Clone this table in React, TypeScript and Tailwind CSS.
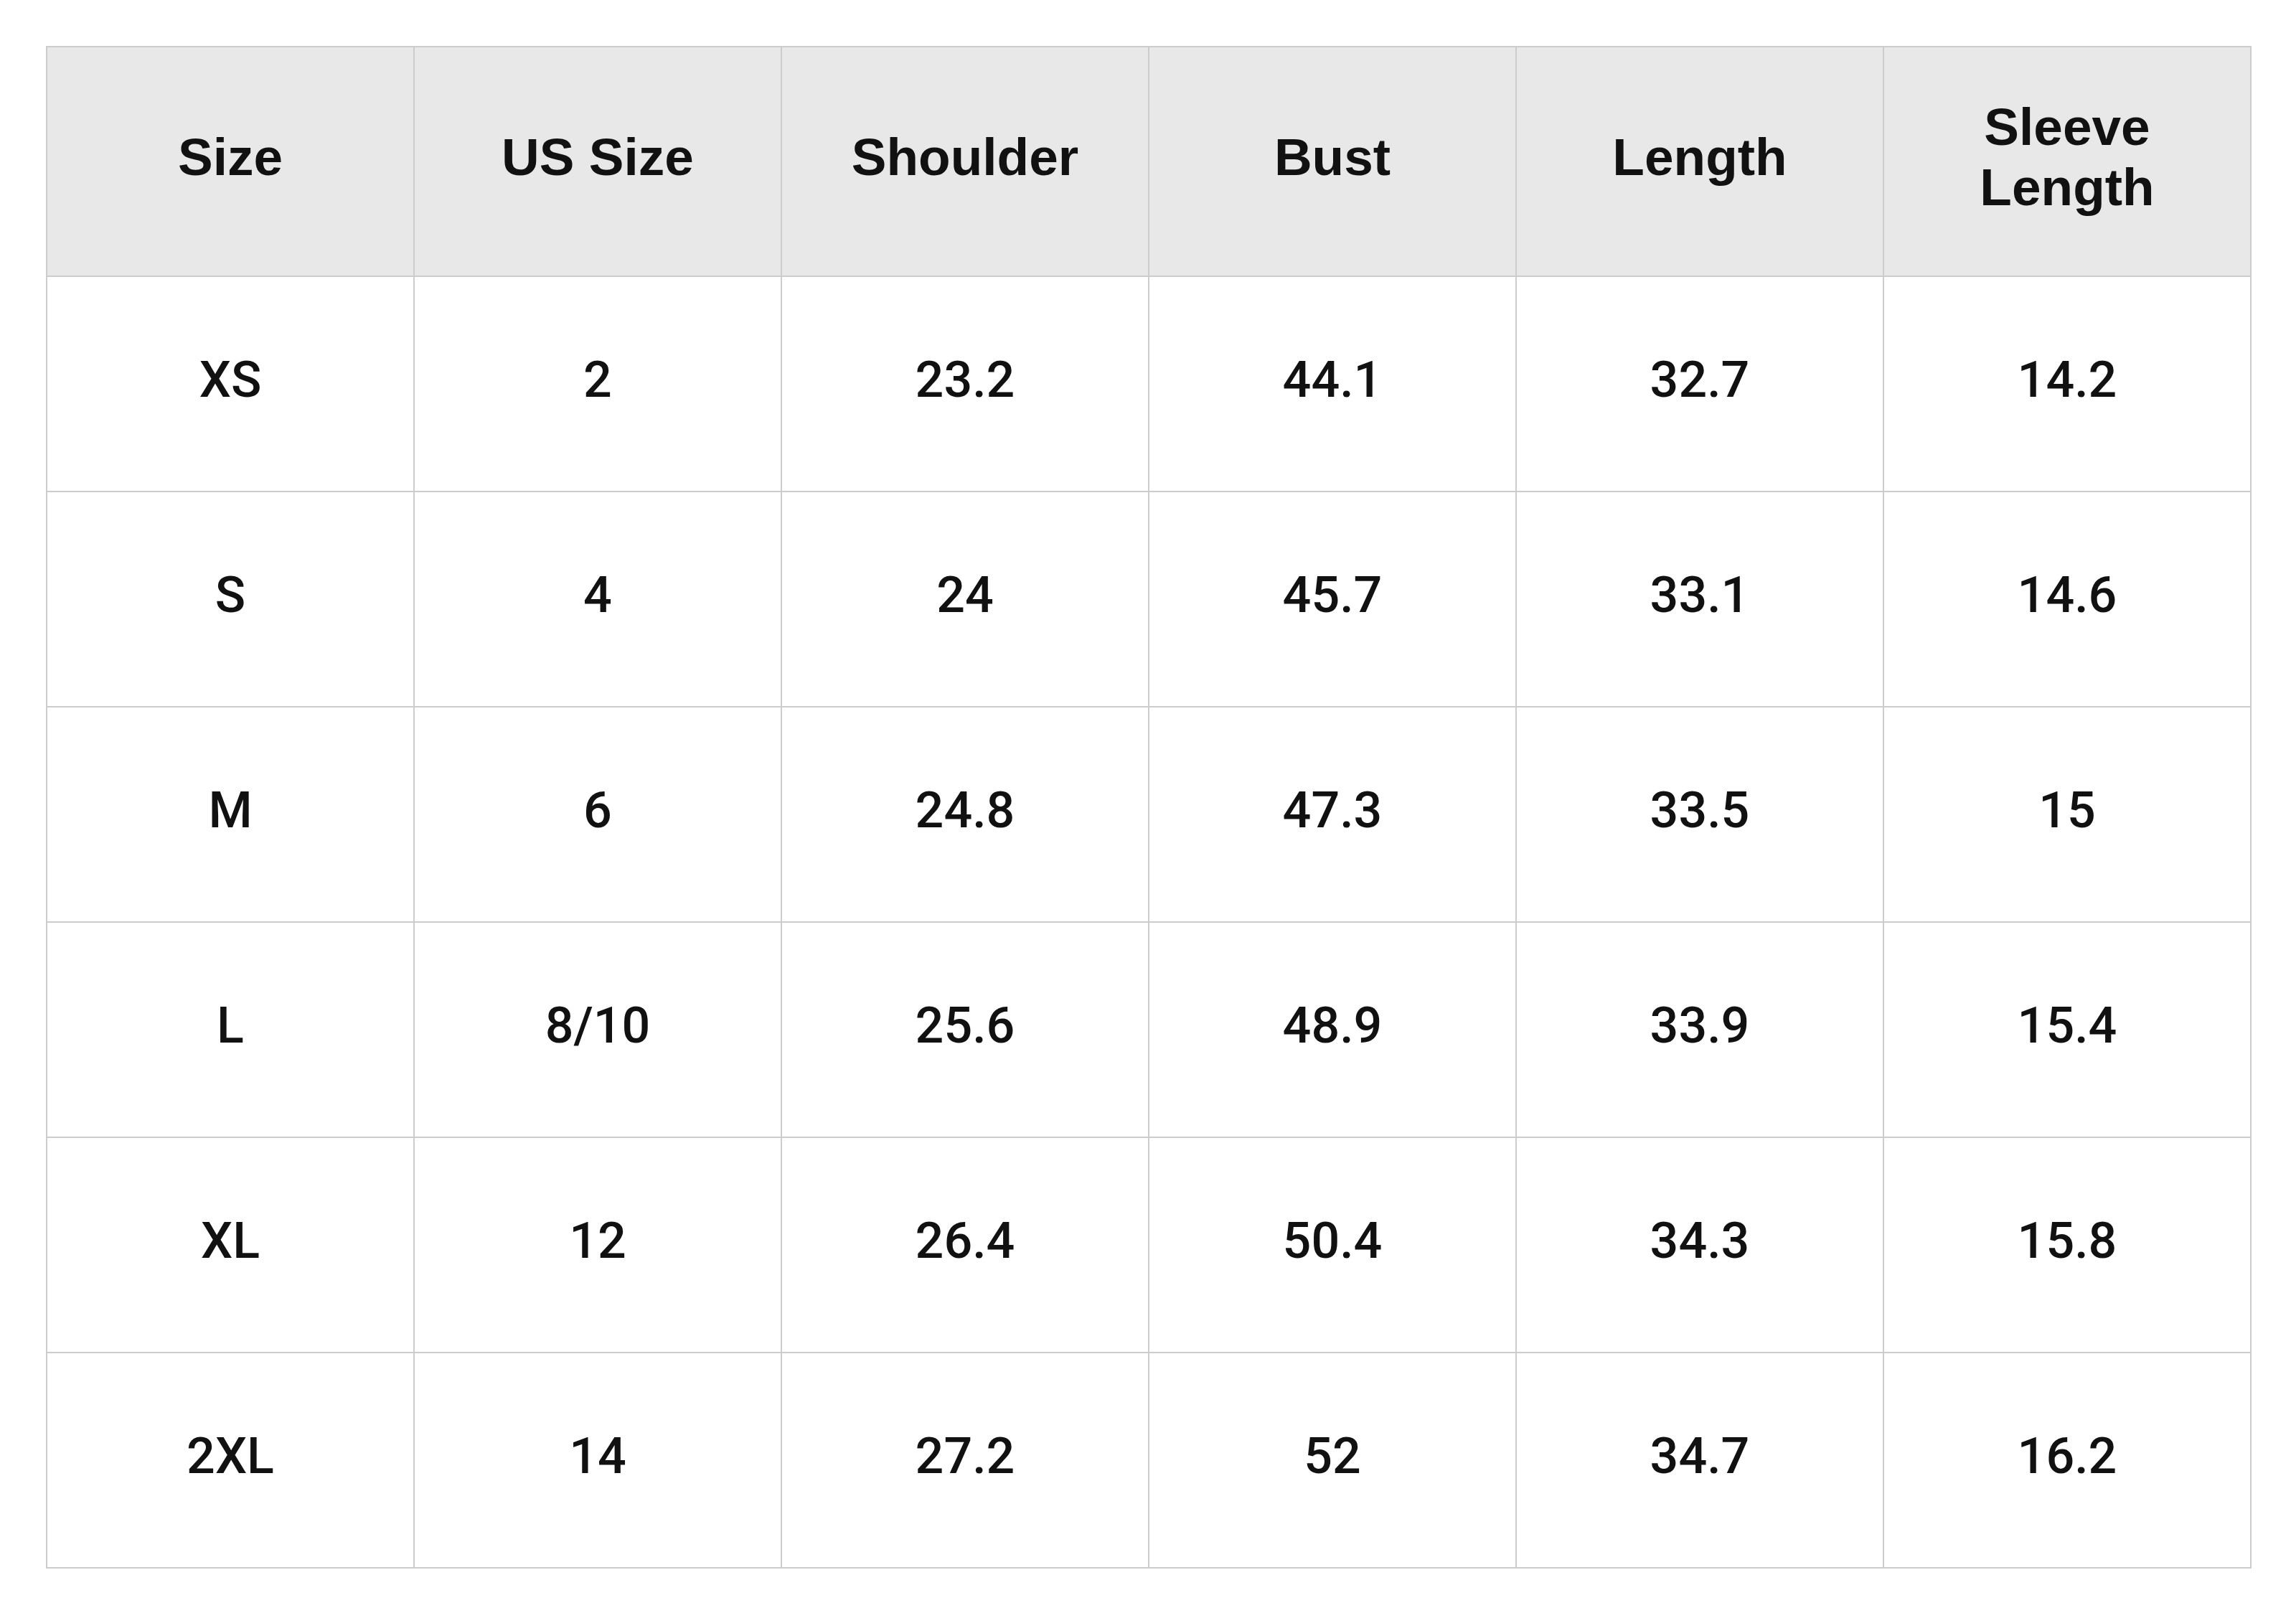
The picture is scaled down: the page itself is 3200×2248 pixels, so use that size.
import React from 'react';

const headers = ['Size', 'US Size', 'Shoulder', 'Bust', 'Length', 'Sleeve Length'];

const rows = [
    ['XS', '2', '23.2', '44.1', '32.7', '14.2'],
    ['S', '4', '24', '45.7', '33.1', '14.6'],
    ['M', '6', '24.8', '47.3', '33.5', '15'],
    ['L', '8/10', '25.6', '48.9', '33.9', '15.4'],
    ['XL', '12', '26.4', '50.4', '34.3', '15.8'],
    ['2XL', '14', '27.2', '52', '34.7', '16.2'],
];

export default function App() {
    return (
        <div className="min-h-[2248px] w-[3200px] bg-white pt-[64px] pl-[64px]">
            <table className="w-[3074px] table-fixed border-collapse border-2 border-[#cccccc] text-[#111111]">
                <thead>
                    <tr className="h-[320px] bg-[#e8e8e8]">
                        {headers.map((h) => (
                            <th
                                key={h}
                                className="border-2 border-[#cccccc] pb-[12px] text-center align-middle font-['Liberation_Sans',Arial,sans-serif] text-[73px] leading-[84px] font-bold"
                            >
                                <div className="mx-auto max-w-[340px]">{h}</div>
                            </th>
                        ))}
                    </tr>
                </thead>
                <tbody>
                    {rows.map((r) => (
                        <tr key={r[0]} className="h-[300px]">
                            {r.map((c, i) => (
                                <td
                                    key={i}
                                    className="border-2 border-[#cccccc] pb-[12px] text-center align-middle font-['Roboto',sans-serif] text-[70px] font-medium"
                                >
                                    {c}
                                </td>
                            ))}
                        </tr>
                    ))}
                </tbody>
            </table>
        </div>
    );
}
